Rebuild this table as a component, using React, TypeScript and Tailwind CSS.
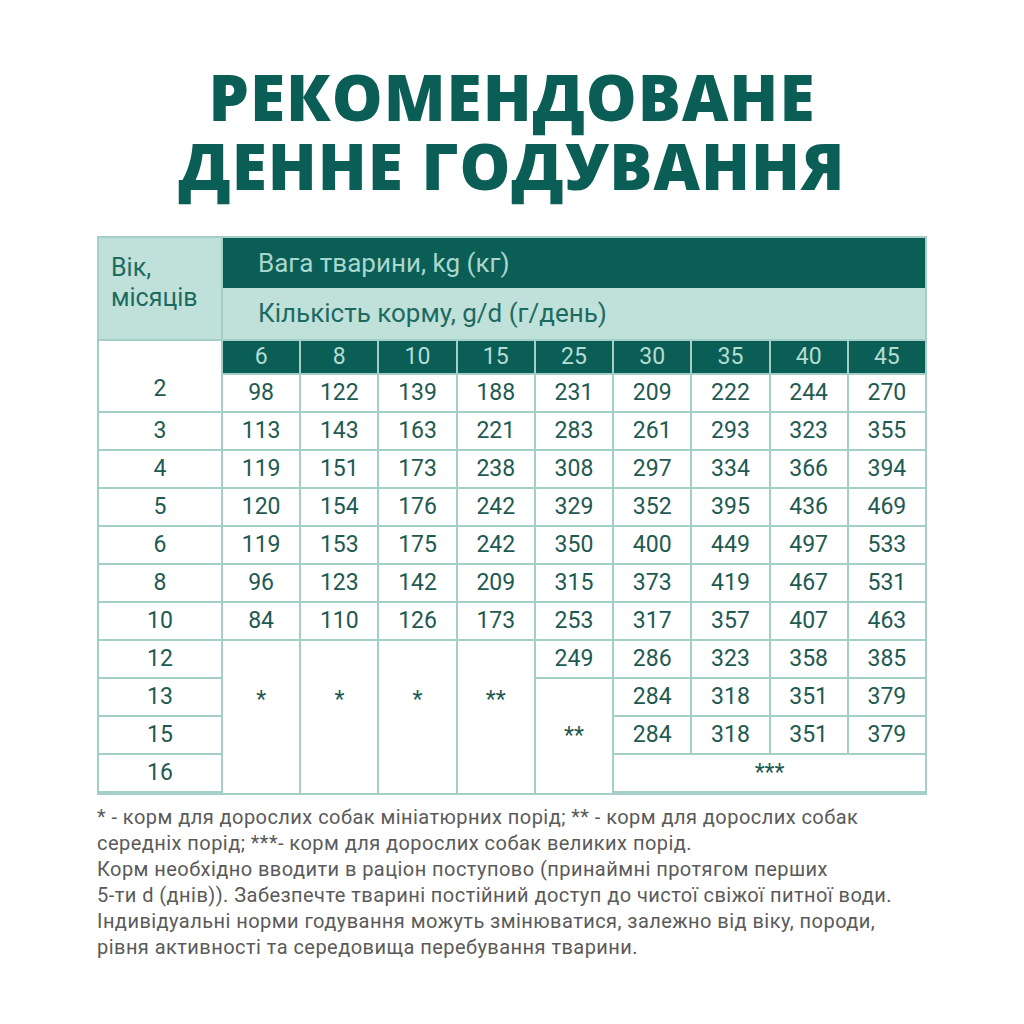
import React from 'react';

const weights = ['6', '8', '10', '15', '25', '30', '35', '40', '45'];

// rows with full data
const fullRows: { age: string; values: string[] }[] = [
  { age: '3', values: ['113', '143', '163', '221', '283', '261', '293', '323', '355'] },
  { age: '4', values: ['119', '151', '173', '238', '308', '297', '334', '366', '394'] },
  { age: '5', values: ['120', '154', '176', '242', '329', '352', '395', '436', '469'] },
  { age: '6', values: ['119', '153', '175', '242', '350', '400', '449', '497', '533'] },
  { age: '8', values: ['96', '123', '142', '209', '315', '373', '419', '467', '531'] },
  { age: '10', values: ['84', '110', '126', '173', '253', '317', '357', '407', '463'] },
];

const firstRow = ['98', '122', '139', '188', '231', '209', '222', '244', '270'];

const cell = 'bg-white flex items-center justify-center text-[23px] text-[#1e5a52]';

const App: React.FC = () => {
  return (
    <div className="w-[1024px] h-[1024px] bg-white flex flex-col items-center" style={{ fontFamily: 'Roboto, "Noto Sans", sans-serif' }}>
      {/* Title */}
      <h1
        className="mt-[65px] flex flex-col items-center gap-[6px] text-[64px] leading-[63px] font-extrabold tracking-[1px] text-[#0b5e55]"
        style={{ fontFamily: '"Open Sans", "Noto Sans", sans-serif' }}
      >
        <span>РЕКОМЕНДОВАНЕ</span>
        <span>ДЕННЕ ГОДУВАННЯ</span>
      </h1>

      {/* Table */}
      <div className="mt-[39px] w-[830px] h-[559px] grid grid-cols-[122px_repeat(9,1fr)] grid-rows-[101px_32px_repeat(11,1fr)] gap-[2px] p-[2px] bg-[#a3cfc7]">
        <div className="col-start-1 row-start-1 bg-[#bfe1da] px-[12px] pt-[15px] text-[25px] leading-[30px] text-[#1d6b60]">
          Вік,
          <br />
          місяців
        </div>
        <div className="col-start-2 col-span-9 row-start-1 flex flex-col">
          <div className="h-[50px] bg-[#0b5e55] flex items-center pl-[35px] text-[26px] text-[#a9d6cd]">
            Вага тварини, kg (кг)
          </div>
          <div className="flex-1 bg-[#bfe1da] flex items-center pl-[35px] text-[26px] text-[#1d6b60]">
            Кількість корму, g/d (г/день)
          </div>
        </div>

        {/* age 2 spans header number row */}
        <div className="col-start-1 row-start-2 row-span-2 bg-white flex items-end justify-center pb-[5px] text-[23px] text-[#1e5a52]">
          2
        </div>
        {weights.map((w) => (
          <div key={w} className="bg-[#0b5e55] flex items-center justify-center text-[23px] text-[#b3dcd3]">
            {w}
          </div>
        ))}
        {firstRow.map((v, i) => (
          <div key={'r2-' + i} className={cell}>
            {v}
          </div>
        ))}

        {fullRows.map((row) => (
          <React.Fragment key={row.age}>
            <div className={cell}>{row.age}</div>
            {row.values.map((v, i) => (
              <div key={row.age + '-' + i} className={cell}>
                {v}
              </div>
            ))}
          </React.Fragment>
        ))}

        {/* age 12 */}
        <div className={cell}>12</div>
        {['*', '*', '*', '**'].map((s, i) => (
          <div key={'star-' + i} className="row-span-5 bg-white flex justify-center pt-[42px] text-[23px] text-[#1e5a52]">
            {s}
          </div>
        ))}
        <div className={cell}>249</div>
        {['286', '323', '358', '385'].map((v) => (
          <div key={'r12-' + v} className={cell}>
            {v}
          </div>
        ))}

        {/* age 13 */}
        <div className={cell}>13</div>
        <div className="row-span-4 bg-white flex items-center justify-center text-[23px] text-[#1e5a52]">**</div>
        {['284', '318', '351', '379'].map((v) => (
          <div key={'r13-' + v} className={cell}>
            {v}
          </div>
        ))}

        {/* age 15 */}
        <div className={cell}>15</div>
        {['284', '318', '351', '379'].map((v) => (
          <div key={'r15-' + v} className={cell}>
            {v}
          </div>
        ))}

        {/* age 16 */}
        <div className={cell}>16</div>
        <div className={'col-span-4 ' + cell}>***</div>
      </div>

      {/* Notes */}
      <div
        className="mt-[9px] w-[830px] text-[20px] leading-[26px] tracking-[0.45px] text-[#5a5a5a] whitespace-nowrap"
        style={{ fontFamily: '"Roboto", "Noto Sans", sans-serif' }}
      >
        * - корм для дорослих собак мініатюрних порід; ** - корм для дорослих собак
        <br />
        середніх порід; ***- корм для дорослих собак великих порід.
        <br />
        Корм необхідно вводити в раціон поступово (принаймні протягом перших
        <br />
        5-ти d (днів)). Забезпечте тварині постійний доступ до чистої свіжої питної води.
        <br />
        Індивідуальні норми годування можуть змінюватися, залежно від віку, породи,
        <br />
        рівня активності та середовища перебування тварини.
      </div>
    </div>
  );
};

export default App;
